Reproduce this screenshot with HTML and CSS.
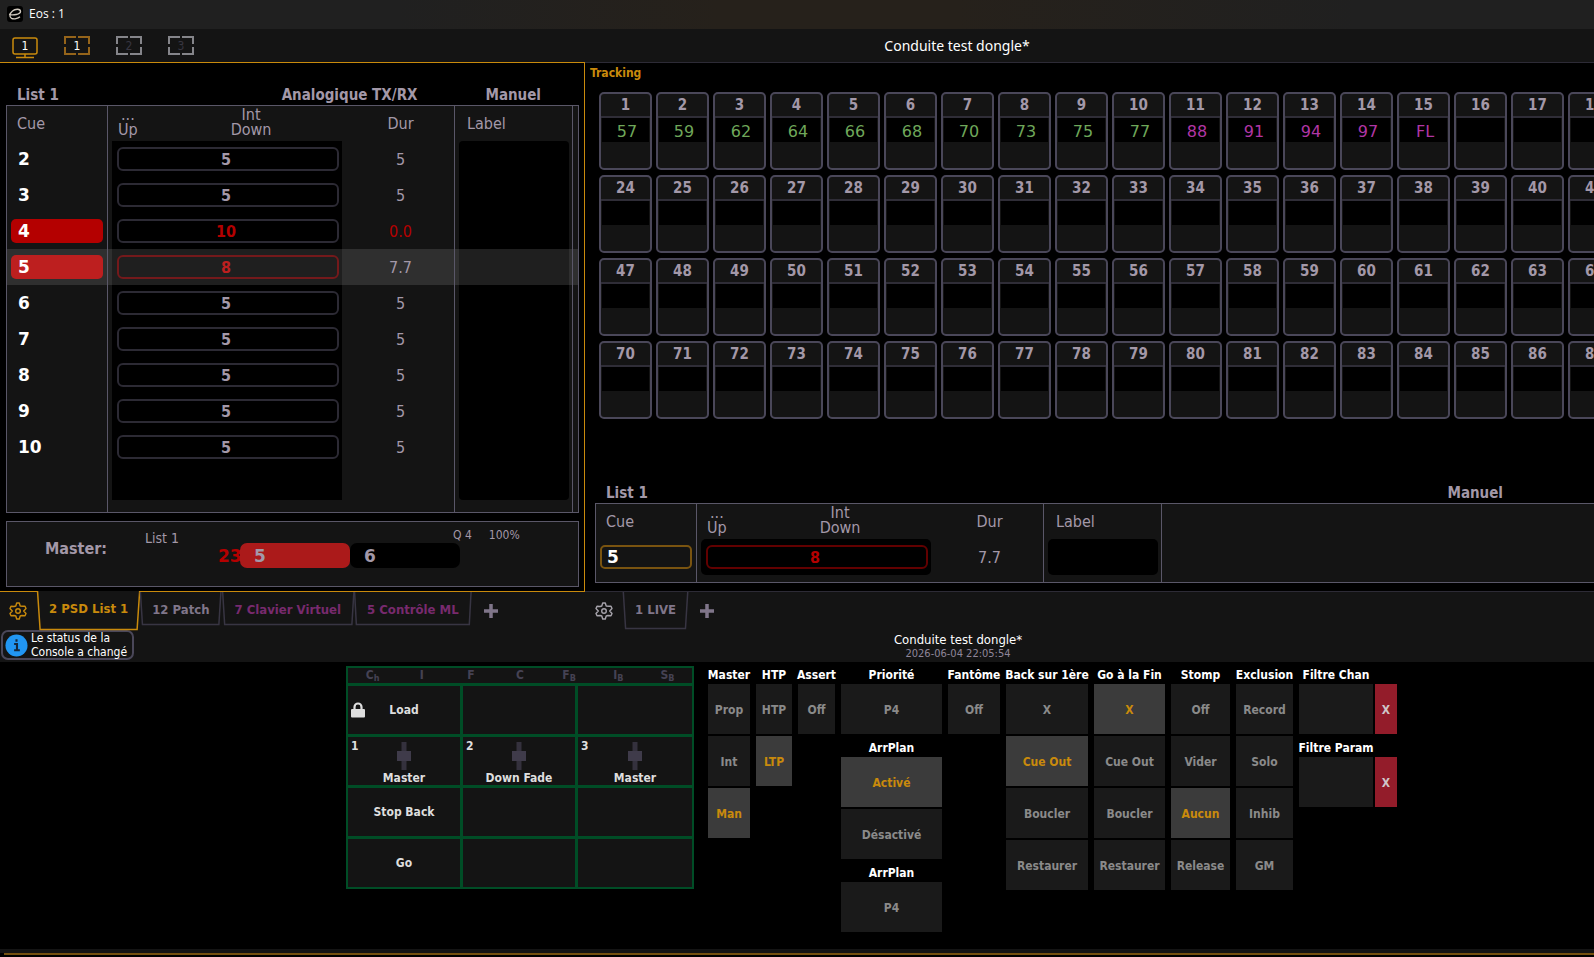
FILE: index.html
```html
<!DOCTYPE html>
<html lang="fr">
<head>
<meta charset="utf-8">
<title>Eos : 1</title>
<link rel="stylesheet" href="styles.css">
</head>
<body>
<header class="titlebar">
  <svg class="logo" viewBox="0 0 16 16"><rect width="16" height="16" rx="3" fill="#000"/><path d="M2 8.500C6 9.500 13.500 8.500 13.500 5.500C13.500 2.500 8 2.800 5.500 5C2.500 7.500 2 11 4.500 12.300C7 13.500 11 12.500 13 10.800" fill="none" stroke="#cfc8bd" stroke-width="1.400"/></svg>
  <span>Eos : 1</span>
</header>
<nav class="toolbar">
  <div class="monitors">
    <button class="monitor"><svg viewBox="0 0 26 24"><rect x="1" y="2" width="24" height="16" rx="2"/><path d="M13 18V21M4 21.500H22"/></svg><span>1</span></button>
    <button class="monitor frame gold"><svg viewBox="0 0 26 24"><path d="M1 8V1H12M14 1H25V8M25 11V18H14M12 18H1V11"/></svg><span>1</span></button>
    <button class="monitor frame off"><svg viewBox="0 0 26 24"><path d="M1 8V1H12M14 1H25V8M25 11V18H14M12 18H1V11"/></svg><span>2</span></button>
    <button class="monitor frame off"><svg viewBox="0 0 26 24"><path d="M1 8V1H12M14 1H25V8M25 11V18H14M12 18H1V11"/></svg><span>3</span></button>
  </div>
  <h1>Conduite test dongle*</h1>
</nav>
<main class="panels">
  <section class="playback">
    <div class="list-head"><b>List 1</b><b class="device">Analogique TX/RX</b><b class="mode">Manuel</b></div>
    <table class="cues">
      <colgroup><col class="c-cue"><col class="c-time"><col class="c-dur"><col class="c-label"><col></colgroup>
      <thead><tr><th class="cue">Cue</th><th><div class="times"><span>...<br>Up</span><span>Int<br>Down</span></div></th><th class="dur">Dur</th><th class="label">Label</th><th></th></tr></thead>
      <tbody>
        <tr><td class="cue"><b>2</b></td><td><div class="well"><b>5</b></div></td><td class="dur">5</td><td class="label"><div class="well first"></div></td><td></td></tr>
        <tr><td class="cue"><b>3</b></td><td><div class="well"><b>5</b></div></td><td class="dur">5</td><td class="label"><div class="well"></div></td><td></td></tr>
        <tr class="running"><td class="cue"><b>4</b></td><td><div class="well"><b>10</b></div></td><td class="dur">0.0</td><td class="label"><div class="well"></div></td><td></td></tr>
        <tr class="selected"><td class="cue"><b>5</b></td><td><div class="well"><b>8</b></div></td><td class="dur">7.7</td><td class="label"><div class="well"></div></td><td></td></tr>
        <tr><td class="cue"><b>6</b></td><td><div class="well"><b>5</b></div></td><td class="dur">5</td><td class="label"><div class="well"></div></td><td></td></tr>
        <tr><td class="cue"><b>7</b></td><td><div class="well"><b>5</b></div></td><td class="dur">5</td><td class="label"><div class="well"></div></td><td></td></tr>
        <tr><td class="cue"><b>8</b></td><td><div class="well"><b>5</b></div></td><td class="dur">5</td><td class="label"><div class="well"></div></td><td></td></tr>
        <tr><td class="cue"><b>9</b></td><td><div class="well"><b>5</b></div></td><td class="dur">5</td><td class="label"><div class="well"></div></td><td></td></tr>
        <tr><td class="cue"><b>10</b></td><td><div class="well"><b>5</b></div></td><td class="dur">5</td><td class="label"><div class="well"></div></td><td></td></tr>
        <tr class="blank"><td class="cue"></td><td><div class="well"></div></td><td class="dur"></td><td class="label"><div class="well last"></div></td><td></td></tr>
      </tbody>
      <tfoot><tr><td class="cue"></td><td></td><td class="dur"></td><td class="label"></td><td></td></tr></tfoot>
    </table>
    <div class="master">
      <b class="master-name">Master:</b>
      <div class="master-body">
        <div class="master-info"><span>List 1</span><span class="q">Q 4</span><span class="pct">100%</span></div>
        <div class="master-cues"><b class="count">23</b><b class="cell active">5</b><b class="cell">6</b></div>
      </div>
    </div>
  </section>
  <section class="live">
    <h2>Tracking</h2>
    <div class="channels" id="channels"></div>
    <div class="list-head"><b>List 1</b><b class="mode">Manuel</b></div>
    <table class="cues">
      <colgroup><col class="c-cue"><col class="c-time"><col class="c-dur"><col class="c-label"><col></colgroup>
      <thead><tr><th class="cue">Cue</th><th><div class="times"><span>...<br>Up</span><span>Int<br>Down</span></div></th><th class="dur">Dur</th><th class="label">Label</th><th></th></tr></thead>
      <tbody><tr class="current"><td class="cue"><b>5</b></td><td><div class="well"><b>8</b></div></td><td class="dur">7.7</td><td class="label"><div class="well"></div></td><td></td></tr></tbody>
      <tfoot><tr><td class="cue"></td><td></td><td class="dur"></td><td class="label"></td><td></td></tr></tfoot>
    </table>
  </section>
</main>
<div class="tabbars">
  <nav class="tabs tabs-left">
    <button class="gear" aria-label="Options"><svg viewBox="0 0 18 18"><path d="M7.700 1H10.300L11.200 4L14 4.300L16 4.300L17 6.500L14.700 9L17 11.500L16 13.700L13 13.500L11.200 14L10.300 17H7.700L6.800 14L5 13.500L2 13.700L1 11.500L3.300 9L1 6.500L2 4.300L5 4.500L6.800 4Z"/><circle cx="9" cy="9" r="2.300"/></svg></button>
    <button class="tab active"><svg viewBox="0 0 100 38" preserveAspectRatio="none"><path d="M.500 0L3 37.500H97L99.500 0"/></svg>2 PSD List 1</button>
    <button class="tab"><svg viewBox="0 0 100 38" preserveAspectRatio="none"><path d="M.500 0L3 37.500H97L99.500 0"/></svg>12 Patch</button>
    <button class="tab violet"><svg viewBox="0 0 100 38" preserveAspectRatio="none"><path d="M.500 0L2 37.500H98L99.500 0"/></svg>7 Clavier Virtuel</button>
    <button class="tab violet"><svg viewBox="0 0 100 38" preserveAspectRatio="none"><path d="M.500 0L2 37.500H98L99.500 0"/></svg>5 Contrôle ML</button>
    <button class="plus" aria-label="Ajouter"><svg viewBox="0 0 14 14"><path d="M7 0V14M0 7H14"/></svg></button>
  </nav>
  <nav class="tabs tabs-right">
    <button class="gear" aria-label="Options"><svg viewBox="0 0 18 18"><path d="M7.700 1H10.300L11.200 4L14 4.300L16 4.300L17 6.500L14.700 9L17 11.500L16 13.700L13 13.500L11.200 14L10.300 17H7.700L6.800 14L5 13.500L2 13.700L1 11.500L3.300 9L1 6.500L2 4.300L5 4.500L6.800 4Z"/><circle cx="9" cy="9" r="2.300"/></svg></button>
    <button class="tab front"><svg viewBox="0 0 100 38" preserveAspectRatio="none"><path d="M.500 0L4 37.500H96L99.500 0"/></svg>1 LIVE</button>
    <button class="plus" aria-label="Ajouter"><svg viewBox="0 0 14 14"><path d="M7 0V14M0 7H14"/></svg></button>
  </nav>
</div>
<div class="statusbar">
  <div class="notice"><svg viewBox="0 0 24 24"><circle cx="12" cy="12" r="11.500" fill="#2196f3"/><path d="M12 5.500V8M9.500 10.500H12.500V17M9.500 17H15.500" fill="none" stroke="#16283c" stroke-width="2.200"/></svg><span>Le status de la<br>Console a changé</span></div>
  <div class="show"><span>Conduite test dongle*</span><time>2026-06-04 22:05:54</time></div>
</div>
<section class="workspace">
  <div class="faders">
    <div class="legend"><span>C<sub>h</sub></span><span>I</span><span>F</span><span>C</span><span>F<sub>B</sub></span><span>I<sub>B</sub></span><span>S<sub>B</sub></span></div>
    <button class="fader"><svg class="lock" viewBox="0 0 14 16"><path d="M3.500 8V5A3.500 3.500 0 0 1 10.500 5V8" fill="none" stroke="#dedede" stroke-width="2.200"/><rect y="7" width="14" height="8.500" rx="1" fill="#dedede"/></svg>Load</button>
    <button class="fader"></button><button class="fader"></button>
    <button class="fader slider"><i>1</i><svg viewBox="0 0 14 28"><path d="M4.500 0H9.500V28H4.500Z"/><path class="knob" d="M0 9H14V19H0Z"/></svg>Master</button>
    <button class="fader slider"><i>2</i><svg viewBox="0 0 14 28"><path d="M4.500 0H9.500V28H4.500Z"/><path class="knob" d="M0 9H14V19H0Z"/></svg>Down Fade</button>
    <button class="fader slider"><i>3</i><svg viewBox="0 0 14 28"><path d="M4.500 0H9.500V28H4.500Z"/><path class="knob" d="M0 9H14V19H0Z"/></svg>Master</button>
    <button class="fader">Stop Back</button><button class="fader"></button><button class="fader"></button>
    <button class="fader">Go</button><button class="fader"></button><button class="fader"></button>
  </div>
  <div class="options">
    <div class="opt"><h3>Master</h3><button>Prop</button><button>Int</button><button class="on">Man</button></div>
    <div class="opt"><h3>HTP</h3><button>HTP</button><button class="on">LTP</button></div>
    <div class="opt"><h3>Assert</h3><button>Off</button></div>
    <div class="opt"><h3>Priorité</h3><button>P4</button><h3>ArrPlan</h3><button class="on">Activé</button><button>Désactivé</button><h3>ArrPlan</h3><button>P4</button></div>
    <div class="opt"><h3>Fantôme</h3><button>Off</button></div>
    <div class="opt"><h3>Back sur 1ère</h3><button>X</button><button class="on">Cue Out</button><button>Boucler</button><button>Restaurer</button></div>
    <div class="opt"><h3>Go à la Fin</h3><button class="on">X</button><button>Cue Out</button><button>Boucler</button><button>Restaurer</button></div>
    <div class="opt"><h3>Stomp</h3><button>Off</button><button>Vider</button><button class="on">Aucun</button><button>Release</button></div>
    <div class="opt"><h3>Exclusion</h3><button>Record</button><button>Solo</button><button>Inhib</button><button>GM</button></div>
    <div class="opt filter"><h3>Filtre Chan</h3><div><button aria-label="Filtre Chan"></button><button class="clear">X</button></div><h3>Filtre Param</h3><div><button aria-label="Filtre Param"></button><button class="clear">X</button></div></div>
  </div>
</section>
<footer class="cmdline"></footer>
<script src="app.js"></script>
</body>
</html>
```
FILE: styles.css
```css
* { box-sizing: border-box; }
:root {
  --panel: #141414;
  --gold: #c98a0c;
  --line: #5a5768;
  --frame: #4a4759;
  --text: #a398a8;
  --red: #b40000;
}
body {
  margin: 0;
  min-height: 100vh;
  display: flex;
  flex-direction: column;
  overflow-x: hidden;
  background: #000;
  color: var(--text);
  font: 15px "DejaVu Sans Condensed", "DejaVu Sans", sans-serif;
}
h1, h2, h3 { margin: 0; font-weight: 400; }
button { font: inherit; color: inherit; background: none; border: 0; padding: 0; }

.titlebar {
  height: 29px;
  display: flex;
  align-items: center;
  gap: 6px;
  padding: 0 7px 2px;
  background: linear-gradient(90deg, #202020 0, #202020 25%, #26211b 45%, #26211b 60%, #202020 85%);
  color: #fff;
  font: 12px "Open Sans", sans-serif;
}
.logo { width: 16px; height: 16px; }
.toolbar {
  height: 33px;
  display: grid;
  grid-template-columns: 1fr auto 1fr;
  align-items: center;
  background: var(--panel);
}
.toolbar h1 {
  grid-column: 2;
  color: #fff;
  font: 14px "Noto Sans", sans-serif;
  padding: 0 0 1px 320px;
}
.monitors { display: flex; gap: 26px; padding: 5px 0 0 12px; }
.monitor { display: grid; width: 26px; height: 24px; color: #fff; font-size: 12px; }
.monitor > * { grid-area: 1 / 1; }
.monitor svg { width: 26px; height: 24px; fill: none; stroke: var(--gold); stroke-width: 1.5; }
.monitor span { line-height: 20px; text-align: center; }
.monitor.frame svg { stroke-width: 2; stroke: #95641a; }
.monitor.off { color: #383641; }
.monitor.off svg { stroke: #85858a; }

.panels { display: grid; grid-template-columns: 585px minmax(0, 1fr); }
.playback { padding: 22px 5px 4px 6px; border-top: 1px solid var(--gold); border-right: 1px solid var(--gold); }
.list-head { display: flex; height: 20px; line-height: 21px; padding-left: 11px; }
.playback .device { margin-left: auto; margin-right: 68px; }
.playback .mode { margin-right: 38px; }

.cues {
  width: 100%;
  table-layout: fixed;
  border-spacing: 0;
  border: 1px solid var(--line);
  background: var(--panel);
}
.c-cue { width: 101px; }
.c-time { width: 237px; }
.c-dur { width: 110px; }
.c-label { width: 118px; }
.cues th, .cues td { padding: 0; }
.cues th { height: 35px; font-size: 16px; font-weight: 400; }
.cues td { height: 36px; font-size: 16px; }
.cues .blank td, .cues .blank .well { height: 35px; }
.cues tfoot td { height: 12px; }
.cues .cue, .cues .dur, .cues .label { border-right: 1px solid var(--line); }
.cues .dur { text-align: center; padding-left: 2px; }
.cues th.cue { text-align: left; padding-left: 10px; }
.cues th.label { text-align: left; padding-left: 12px; }
.times { display: flex; gap: 93px; padding: 0 0 3px 10px; line-height: 15px; }
td.cue b {
  display: block;
  margin: 0 4px;
  height: 24px;
  line-height: 24px;
  padding-left: 7px;
  border-radius: 5px;
  color: #fff;
  font-family: "DejaVu Sans", sans-serif;
  font-size: 17px;
}
.well { height: 36px; margin: 0 3px 0 4px; padding: 6px 3px 6px 5px; background: #000; }
.well.first { border-radius: 4px 4px 0 0; }
.well.last { border-radius: 0 0 4px 4px; }
.well b {
  display: block;
  height: 24px;
  line-height: 21px;
  padding-right: 4px;
  border: 2px solid #2c2a34;
  border-radius: 6px;
  text-align: center;
}
.running td.cue b { background: var(--red); }
.running .well b, .running .dur { color: var(--red); }
.selected td { background: #2f2f2f; }
.selected .well { background: #1f1f1f; }
.selected td.cue b { background: #bd1f1f; }
.selected .well b { color: #bd1f1f; border-color: #74191b; }
.current td.cue b { border: 2px solid #7a5410; line-height: 21px; padding-left: 5px; }
.current .well { border-radius: 5px; }
.current .well b { color: var(--red); border-color: #620000; }

.master {
  display: flex;
  align-items: center;
  height: 66px;
  margin-top: 8px;
  padding-left: 38px;
  border: 1px solid var(--line);
  background: var(--panel);
}
.master-name { width: 100px; padding-bottom: 12px; font-size: 16px; }
.master-body { flex: 1; align-self: stretch; padding-top: 6px; }
.master-info { display: flex; font-size: 14px; line-height: 20px; height: 15px; }
.q { margin-left: 274px; font-size: 12px; line-height: 15px; }
.pct { margin-left: 17px; font-size: 12px; line-height: 15px; }
.master-cues { display: flex; padding-left: 73px; font-family: "DejaVu Sans", sans-serif; font-size: 17px; line-height: 27px; }
.count { width: 22px; color: var(--red); }
.cell { width: 110px; height: 25px; padding-left: 14px; border-radius: 7px; background: #000; }
.cell.active { background: #ab1a1a; }

.live {
  display: flex;
  flex-direction: column;
  overflow: hidden;
  padding-left: 1px;
  border-top: 1px solid #2d2b36;
}
.live h2 { padding: 3px 0 0 4px; height: 29px; color: var(--gold); font-size: 12px; font-weight: 700; }
.channels {
  display: grid;
  grid-template-columns: repeat(18, 53px);
  gap: 5px 4px;
  padding-left: 13px;
}
.channel {
  height: 78px;
  border: 2px solid var(--frame);
  border-radius: 5px;
  background: var(--panel);
  text-align: center;
}
.channel b { display: block; height: 24px; line-height: 23px; border-bottom: 2px solid #2f2d37; }
.channel span {
  display: block;
  height: 24px;
  margin: 0 1px;
  padding-left: 3px;
  background: #000;
  color: #6fa75a;
  font: 16px/28px "DejaVu Sans", sans-serif;
}
.channel .up { color: #b136a5; }
.live .list-head { margin-top: auto; padding-left: 20px; }
.live .mode { margin-left: auto; margin-right: 91px; }
.live .cues { margin: 0 0 8px 9px; }
.live .cues tfoot td { height: 7px; }

.tabbars { display: grid; grid-template-columns: 585px minmax(0, 1fr); background: var(--panel); }
.tabs { display: flex; height: 39px; }
.tabs-left { border-top: 1px solid var(--gold); }
.tabs-right { border-top: 1px solid #2d2b36; padding-left: 1px; }
.tab {
  position: relative;
  height: 33px;
  padding: 2px 12px 0;
  color: #80768a;
  font-size: 13px;
  font-weight: 700;
}
.tab svg { position: absolute; inset: 0; width: 100%; height: 100%; fill: none; stroke: #383543; stroke-width: 1.5; overflow: visible; }
.tab path { vector-effect: non-scaling-stroke; }
.tab.front { height: 37px; padding-bottom: 5px; }
.tab.active { height: 39px; padding-bottom: 6px; margin-top: -1px; background: linear-gradient(var(--panel), var(--panel)) center / calc(100% - 2px) 100% no-repeat; color: var(--gold); }
.tab.active svg { stroke: var(--gold); }
.tab.violet { color: #782a6e; padding: 2px 13px 0; }
.gear { width: 37px; padding-right: 1px; }
.gear svg { display: block; margin: 0 auto; width: 18px; height: 18px; fill: none; stroke: var(--gold); stroke-width: 1.4; stroke-linejoin: round; }
.tabs-right .gear svg { stroke: #a6a3ab; }
.plus { padding: 0 12px; }
.plus svg { display: block; width: 14px; height: 14px; stroke: #80768a; stroke-width: 3.5; }

.statusbar {
  display: flex;
  align-items: flex-start;
  height: 32px;
  padding-left: 1px;
  background: var(--panel);
}
.notice {
  display: flex;
  align-items: center;
  gap: 3px;
  width: 133px;
  height: 30px;
  padding: 0 2px;
  border: 2px solid var(--frame);
  border-radius: 7px;
  color: #fff;
  font-size: 12px;
  line-height: 14px;
  white-space: nowrap;
}
.notice svg { width: 23px; height: 23px; flex: none; }
.show { flex: 1; display: flex; flex-direction: column; align-items: center; padding: 2px 0 0 188px; color: #fff; font-size: 13px; line-height: 15px; }
.show time { color: #8f8699; font-size: 11px; line-height: 13px; }

.workspace { flex: 1; display: flex; align-items: flex-start; gap: 14px; padding: 4px 0 17px 346px; }
.faders {
  display: grid;
  grid-template-columns: 112px 112px 114px;
  grid-template-rows: 15px repeat(4, 48px);
  gap: 3px;
  padding: 2px;
  background: #004d26;
  color: #dedede;
  font-size: 12px;
  font-weight: 700;
}
.legend { grid-column: 1 / -1; display: grid; grid-template-columns: repeat(7, 1fr); background: var(--panel); color: #454253; text-align: center; line-height: 14px; }
.legend sub { font-size: 9px; line-height: 1px; vertical-align: -2px; }
.fader { position: relative; background: var(--panel); }
.lock { position: absolute; left: 3px; top: 16px; width: 14px; height: 16px; }
.slider { display: flex; flex-direction: column; align-items: center; justify-content: space-between; padding: 5px 0 0; line-height: 14px; }
.slider svg { width: 14px; height: 28px; fill: #34313d; }
.slider .knob { fill: #3f3b4a; }
.fader i { position: absolute; left: 3px; top: 2px; font-style: normal; }

.options {
  display: grid;
  grid-template-columns: 42px 36px 37px 101px 52px 82px 71px 59px 57px 98px;
  align-items: start;
  gap: 6px;
  font-size: 12px;
  font-weight: 700;
}
.opt { display: flex; flex-direction: column; gap: 2px; }
.opt h3 { display: flex; justify-content: center; height: 16px; line-height: 18px; color: #fff; font-size: 12px; font-weight: 700; white-space: nowrap; }
.opt button + h3, .opt div + h3 { height: 19px; padding-top: 3px; }
.opt button { height: 50px; padding-top: 2px; background: #1a1a1a; color: #8a8a8a; }
.opt button.on { background: #3b3b3b; color: var(--gold); }
.filter div { display: grid; grid-template-columns: 1fr 22px; gap: 2px; }
.filter h3 { padding-right: 24px; }
.opt button.clear { background: #931c2a; color: #cfc6c8; }

.cmdline { height: 8px; border-top: 4px solid var(--panel); }
.cmdline::after { content: ""; display: block; height: 2px; margin-left: 4px; background: #74500f; }
```
FILE: app.js
```js
// Levels of the channels that are currently live; a "+" marks a raised level.
const levels = ["57", "59", "62", "64", "66", "68", "70", "73", "75", "77", "+88", "+91", "+94", "+97", "+FL"];
const grid = document.getElementById("channels");
for (const first of [1, 24, 47, 70]) {
  for (let n = first; n < first + 18; n++) {
    const cell = document.createElement("div");
    cell.className = "channel";
    const number = document.createElement("b");
    number.textContent = n;
    const value = document.createElement("span");
    const level = levels[n - 1] || "";
    value.textContent = level.replace("+", "");
    if (level.startsWith("+")) value.className = "up";
    cell.append(number, value);
    grid.append(cell);
  }
}
```
